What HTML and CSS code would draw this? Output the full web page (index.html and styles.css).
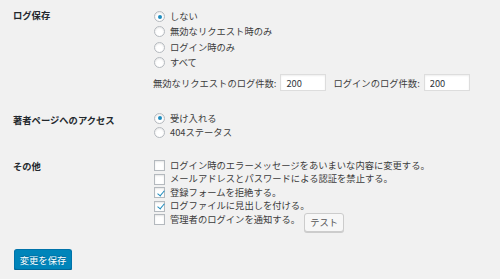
FILE: index.html
```html
<!DOCTYPE html>
<html lang="ja">
<head>
  <meta charset="UTF-8" />
  <meta name="viewport" content="width=device-width, initial-scale=1.0" />
  <title>ログ設定</title>
  <link rel="stylesheet" href="styles.css">
</head>
<body>
  <form class="settings">
    <!-- ログ保存 -->
    <div class="row row-log">
      <div class="th">ログ保存</div>
      <div class="td">
        <div class="choices choices-log">
          <label class="choice"><input type="radio" name="log" checked>しない</label>
          <label class="choice"><input type="radio" name="log">無効なリクエスト時のみ</label>
          <label class="choice"><input type="radio" name="log">ログイン時のみ</label>
          <label class="choice"><input type="radio" name="log">すべて</label>
        </div>
        <div class="counts">
          <label class="count">無効なリクエストのログ件数: <input type="text" class="small-text" value="200"></label>
          <label class="count">ログインのログ件数: <input type="text" class="small-text" value="200"></label>
        </div>
      </div>
    </div>

    <!-- 著者ページ -->
    <div class="row row-author">
      <div class="th">著者ページへのアクセス</div>
      <div class="td">
        <div class="choices choices-author">
          <label class="choice"><input type="radio" name="author" checked>受け入れる</label>
          <label class="choice"><input type="radio" name="author">404ステータス</label>
        </div>
      </div>
    </div>

    <!-- その他 -->
    <div class="row row-other">
      <div class="th">その他</div>
      <div class="td">
        <div class="choices choices-other">
          <label class="choice"><input type="checkbox">ログイン時のエラーメッセージをあいまいな内容に変更する。</label>
          <label class="choice"><input type="checkbox">メールアドレスとパスワードによる認証を禁止する。</label>
          <label class="choice"><input type="checkbox" checked>登録フォームを拒絶する。</label>
          <label class="choice"><input type="checkbox" checked>ログファイルに見出しを付ける。</label>
          <div class="choice choice-last">
            <label><input type="checkbox">管理者のログインを通知する。</label>
            <button type="button" class="button">テスト</button>
          </div>
        </div>
      </div>
    </div>

    <p class="submit">
      <button type="submit" class="button-primary">変更を保存</button>
    </p>
  </form>
</body>
</html>
```

FILE: styles.css
```css
:root {
  --bg: #f1f1f1;
  --text: #3c3c3c;
  --heading: #23282d;
  --border: #b4b9be;
  --accent: #1e8cbe;
  --primary: #0085ba;
}
* {
  box-sizing: border-box;
  margin: 0;
  padding: 0;
}
body {
  background: var(--bg);
  color: var(--text);
  font-family: "Noto Sans CJK JP", sans-serif;
  font-size: 9.3px;
}
.settings {
  padding: 0 13px;
}
.row {
  display: grid;
  grid-template-columns: 140px 1fr;
}
.th {
  color: var(--heading);
  font-weight: bold;
  line-height: 15px;
}
.row-log {
  padding-top: 8px;
}
.row-log .td {
  padding-top: 1px;
}
.row-author {
  padding-top: 20px;
}
.row-author .th {
  padding-top: 2px;
}
.row-other {
  padding-top: 19px;
}
.choices {
  display: flex;
  flex-direction: column;
}
.choice {
  display: flex;
  align-items: center;
  line-height: 15.3px;
  height: 15.3px;
}
.choice label {
  display: flex;
  align-items: center;
}
.choices-author .choice {
  line-height: 14.3px;
  height: 14.3px;
}
.choices-other .choice {
  line-height: 13.5px;
  height: 13.5px;
}
input[type="radio"],
input[type="checkbox"] {
  appearance: none;
  -webkit-appearance: none;
  width: 11px;
  height: 11px;
  margin: 0 5px 0 1px;
  border: 1px solid var(--border);
  background: #fff;
  box-shadow: inset 0 1px 2px rgba(0, 0, 0, 0.1);
  position: relative;
  flex: none;
}
input[type="radio"] {
  border-radius: 50%;
}
input[type="radio"]:checked::before {
  content: '';
  position: absolute;
  left: 2.5px;
  top: 2.5px;
  width: 4px;
  height: 4px;
  border-radius: 50%;
  background: var(--accent);
}
input[type="checkbox"]:checked::before {
  content: '';
  position: absolute;
  left: 3.5px;
  top: 0.5px;
  width: 3px;
  height: 6px;
  border: solid var(--accent);
  border-width: 0 1.5px 1.5px 0;
  transform: rotate(40deg);
}
.counts {
  display: flex;
  align-items: center;
  margin-top: 4px;
}
.count {
  display: flex;
  align-items: center;
}
.count + .count {
  margin-left: 7px;
}
.small-text {
  width: 46px;
  height: 17px;
  margin-left: 4px;
  padding: 0 5px;
  border: 1px solid #ddd;
  background: #fff;
  box-shadow: inset 0 1px 2px rgba(0, 0, 0, 0.07);
  color: #32373c;
  font-family: inherit;
  font-size: 9.3px;
  outline: none;
}
.button {
  margin-left: 4px;
  margin-top: 5px;
  width: 40px;
  height: 19px;
  border: 1px solid #ccc;
  border-radius: 3px;
  background: #f7f7f7;
  box-shadow: 0 1px 0 #ccc;
  color: #555;
  font-family: inherit;
  font-size: 9.3px;
  cursor: pointer;
}
.submit {
  padding-top: 23px;
}
.button-primary {
  margin-left: 1px;
  width: 58px;
  height: 21px;
  border: 1px solid #0073aa;
  border-bottom-color: #006799;
  border-radius: 3px;
  background: var(--primary);
  box-shadow: 0 1px 0 #006799;
  color: #fff;
  text-shadow: 0 -1px 1px #006799;
  font-family: inherit;
  font-size: 9.3px;
  cursor: pointer;
}
```
